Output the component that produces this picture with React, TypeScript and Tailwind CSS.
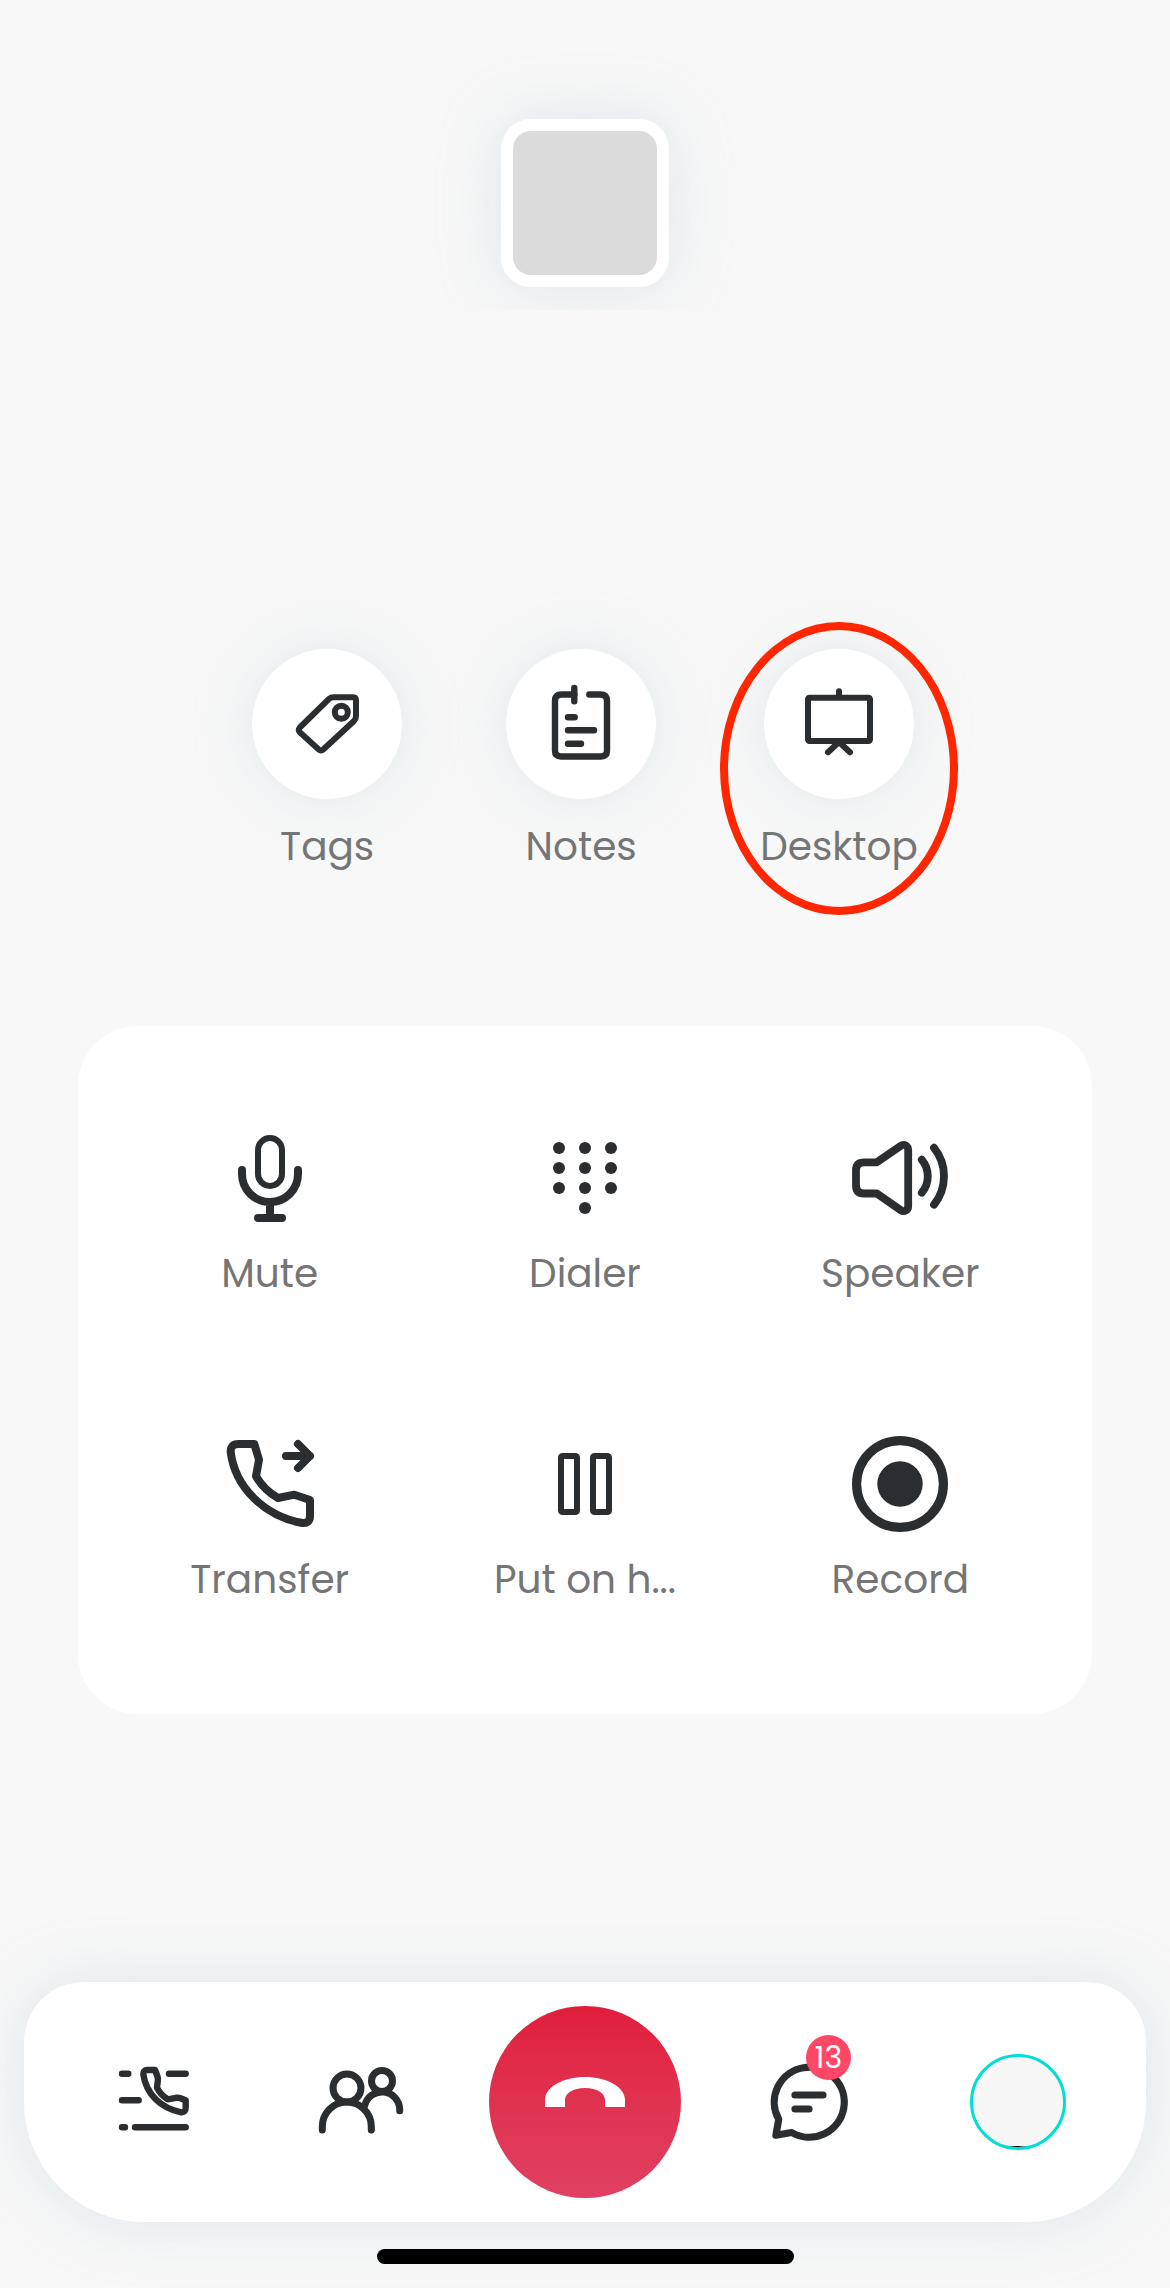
import type { ReactNode } from "react";

interface IconProps {
  children: ReactNode;
  strokeWidth?: number;
}

function Icon({ children, strokeWidth = 8 }: IconProps) {
  return (
    <svg
      viewBox="0 0 96 96"
      className="size-24 shrink-0"
      fill="none"
      stroke="currentColor"
      strokeWidth={strokeWidth}
      strokeLinecap="round"
      strokeLinejoin="round"
      aria-hidden="true"
    >
      {children}
    </svg>
  );
}

function TagIcon() {
  return (
    <Icon strokeWidth={6}>
      <path d="M50 22.8Q52 21.3 54.5 21.3H74Q77 21.3 77 24.3V40Q77 43 75 45L44.5 73.3Q42 75.5 39.5 73.3L20.8 56.3Q18.8 54 20.8 51.5Z" />
      <circle cx="62.3" cy="36.3" r="6.5" />
    </Icon>
  );
}

function NotesIcon() {
  return (
    <Icon strokeWidth={6.4}>
      <path d="M41.3 18.5H28.5Q22 18.5 22 25V74.5Q22 80.5 28 80.5H68Q74 80.5 74 74.5V25Q74 18.5 67.5 18.5H56.3" />
      <path d="M41.3 12V25.3M35 41.3H41.7M35 54.3H61M35 67.7H48" />
    </Icon>
  );
}

function DesktopIcon() {
  return (
    <Icon strokeWidth={6}>
      <rect x="17" y="21.7" width="62" height="43.3" rx="1.5" />
      <path d="M48 15.3V21M37 76.3L48 66L59 76.3" />
    </Icon>
  );
}

function MuteIcon() {
  return (
    <Icon>
      <rect x="36" y="8" width="24" height="48" rx="12" strokeWidth="6" />
      <path d="M20 40V44A28 28 0 0 0 76 44V40M48 72V88M36 88H60" />
    </Icon>
  );
}

const dialerDots = [
  [22, 18], [48, 18], [74, 18],
  [22, 38], [48, 38], [74, 38],
  [22, 58], [48, 58], [74, 58],
  [48, 78],
];

function DialerIcon() {
  return (
    <Icon>
      {dialerDots.map(([x, y]) => (
        <circle key={`${x}-${y}`} cx={x} cy={y} r="6" fill="currentColor" stroke="none" />
      ))}
    </Icon>
  );
}

function SpeakerIcon() {
  return (
    <Icon strokeWidth={7.8}>
      <path d="M12 32.3H24.8L48.5 16C52 13.5 56.2 15.5 56.2 20V76C56.2 80.5 52 82.5 48.5 80L24.8 63.5H12Q4 63.5 4 55.5V40.3Q4 32.3 12 32.3Z" />
      <path d="M69.8 29.7A25.7 25.7 0 0 1 69.8 62.7M82 17.7A45.6 45.6 0 0 1 82 74.7" />
    </Icon>
  );
}

function TransferIcon() {
  return (
    <Icon>
      <path d="M16.3 8H32.3L37 23.7L34 40.3Q42 54 56 62L72.3 58.7L88 64V80Q88 87.5 80.5 87C42 80 13 51 8.7 16Q8.5 8 16.3 8Z" />
      <path d="M64 20H88M76 8L88 20L76 32" />
    </Icon>
  );
}

function PauseIcon() {
  return (
    <Icon strokeWidth={6}>
      <rect x="24" y="20" width="16" height="56" rx="1.5" />
      <rect x="56" y="20" width="16" height="56" rx="1.5" />
    </Icon>
  );
}

function RecordIcon() {
  return (
    <Icon strokeWidth={9.2}>
      <circle cx="48" cy="48" r="43.4" />
      <circle cx="48" cy="48" r="22.7" fill="currentColor" stroke="none" />
    </Icon>
  );
}

function CallLogIcon() {
  return (
    <Icon strokeWidth={6.4}>
      <path d="M18 19.7H24.3M65 19.7H81.7M18 46.3H34.7M18 73.3H21M31 73.3H81.7" />
      <path d="M43 16H51L53.3 22Q54.3 24.5 53.8 27L53 33.7Q56.5 41 63.7 45.3L72 43.8Q74.5 43.5 76.5 44.3L81.7 46.3V53.3Q81.7 58.7 77.3 58.3C57 54.5 42 40 39.3 20.3Q39.3 16 43 16Z" />
    </Icon>
  );
}

function ContactsIcon() {
  return (
    <Icon strokeWidth={7}>
      <circle cx="35" cy="34" r="14" />
      <circle cx="70" cy="27" r="10.5" />
      <path d="M10.3 76V72.5A24.5 24.5 0 0 1 59.3 72.5V76" />
      <path d="M52.8 51.5A17.7 17.7 0 0 1 87.7 55V56.7" />
    </Icon>
  );
}

function ChatIcon() {
  return (
    <Icon strokeWidth={7.2}>
      <path d="M16.7 65.3L13.9 81.3L29.7 78.5A35 35 0 1 0 16.7 65.3Z" />
      <path d="M33 41H61M33 55H47" />
    </Icon>
  );
}

function HangUpIcon() {
  return (
    <svg viewBox="0 0 80 30" className="w-20" fill="white" aria-hidden="true">
      <path d="M0 30V23C0 10 18 0 40 0S80 10 80 23V30H60V23C60 16 52 11 40 11S20 16 20 23V30Z" />
    </svg>
  );
}

interface Action {
  label: string;
  icon: ReactNode;
  highlighted?: boolean;
}

const quickActions: Action[] = [
  { label: "Tags", icon: <TagIcon /> },
  { label: "Notes", icon: <NotesIcon /> },
  { label: "Desktop", icon: <DesktopIcon />, highlighted: true },
];

const callActions: Action[] = [
  { label: "Mute", icon: <MuteIcon /> },
  { label: "Dialer", icon: <DialerIcon /> },
  { label: "Speaker", icon: <SpeakerIcon /> },
  { label: "Transfer", icon: <TransferIcon /> },
  { label: "Put on h...", icon: <PauseIcon /> },
  { label: "Record", icon: <RecordIcon /> },
];

function QuickAction({ label, icon, highlighted }: Action) {
  return (
    <button type="button" className="relative flex flex-col items-center gap-[18px]">
      <span className="flex size-[150px] items-center justify-center rounded-full bg-white shadow-[0_0_60px_rgba(170,195,205,0.28)]">
        {icon}
      </span>
      <span className="text-[39px] leading-[60px] text-[#757575]">{label}</span>
      {highlighted && (
        <span className="pointer-events-none absolute -top-[27px] left-1/2 h-[293px] w-[238px] -translate-x-1/2 rounded-[50%] border-8 border-[#ff2600]" />
      )}
    </button>
  );
}

function CallAction({ label, icon }: Action) {
  return (
    <button type="button" className="flex flex-col items-center gap-[18px]">
      {icon}
      <span className="text-[39px] leading-[60px] text-[#757575]">{label}</span>
    </button>
  );
}

function BottomNav() {
  return (
    <nav className="mx-6 flex h-60 items-center justify-between rounded-t-[60px] rounded-b-[120px] bg-white px-20 shadow-[0_0_60px_rgba(170,195,205,0.35)]">
      <div className="flex gap-28">
        <button type="button" aria-label="Calls">
          <CallLogIcon />
        </button>
        <button type="button" aria-label="Contacts">
          <ContactsIcon />
        </button>
      </div>
      <button
        type="button"
        aria-label="Hang up"
        className="flex size-48 items-center justify-center rounded-full bg-linear-to-b from-[#e01e3c] to-[#e04062] pb-5"
      >
        <HangUpIcon />
      </button>
      <div className="flex gap-28">
        <button type="button" aria-label="Messages" className="relative">
          <ChatIcon />
          <span className="absolute -top-[19px] left-11 flex size-[45px] items-center justify-center rounded-full bg-[#ff4766] text-[30px] leading-none text-white">
            13
          </span>
        </button>
        <button
          type="button"
          aria-label="Profile"
          className="flex size-24 items-end overflow-hidden rounded-full border-3 border-[#00dfd4] bg-[#f7f7f7]"
        >
          <span className="h-px w-full bg-black" />
        </button>
      </div>
    </nav>
  );
}

export default function App() {
  return (
    <div className="flex min-h-screen flex-col bg-[#f8f8f8] font-['Poppins','Inter',sans-serif] text-[#2a2e31]">
      <header className="flex h-[310px] justify-center overflow-hidden pt-[119px]">
        <div className="size-[168px] rounded-[30px] border-12 border-white bg-[#dbdbdb] shadow-[0_0_60px_rgba(170,195,205,0.35)]" />
      </header>

      <main className="mt-[339px] flex flex-col">
        <div className="flex justify-center gap-[104px]">
          {quickActions.map((action) => (
            <QuickAction key={action.label} {...action} />
          ))}
        </div>
        <div className="mx-[78px] mt-[149px] grid grid-cols-3 gap-y-[132px] rounded-[60px] bg-white px-[34px] py-[104px]">
          {callActions.map((action) => (
            <CallAction key={action.label} {...action} />
          ))}
        </div>
      </main>

      <footer className="mt-auto flex flex-col pb-6">
        <BottomNav />
        <div className="mt-[27px] h-[15px] w-[417px] self-center rounded-full bg-black" />
      </footer>
    </div>
  );
}
